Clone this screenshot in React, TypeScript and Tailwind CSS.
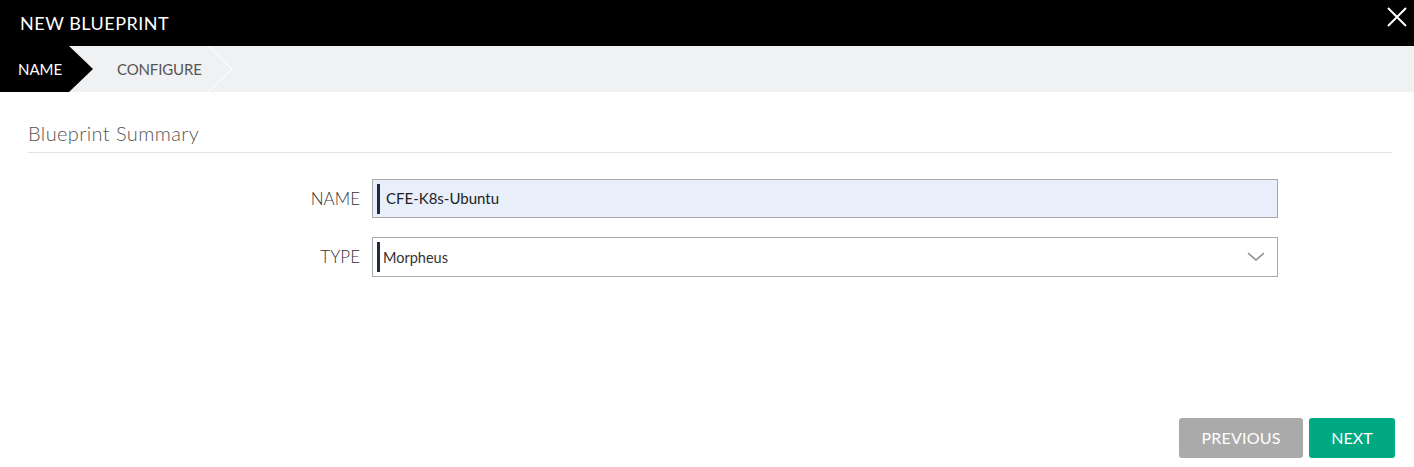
import React from 'react';

export default function App() {
  return (
    <div className="w-[1414px] h-[467px] bg-white flex flex-col font-['Lato','Open_Sans',sans-serif] overflow-hidden">
      {/* Header */}
      <div className="h-[46px] bg-black flex items-center justify-between pl-[20px] pr-[6px]">
        <h1 className="text-white text-[18px] tracking-[0.5px]">NEW BLUEPRINT</h1>
        <button className="w-[22px] h-[22px] flex items-center justify-center text-white mb-[12px]">
          <svg width="20" height="20" viewBox="0 0 20 20" fill="none" stroke="currentColor" strokeWidth="2">
            <path d="M1 1L19 19M19 1L1 19" />
          </svg>
        </button>
      </div>

      {/* Steps */}
      <div className="h-[46px] bg-[#f0f1f3] flex items-stretch">
        <div className="w-[93px] bg-black flex items-center pl-[18px] [clip-path:polygon(0_0,69px_0,100%_50%,69px_100%,0_100%)]">
          <span className="text-white text-[15px]">NAME</span>
        </div>
        <div className="relative w-[140px] flex items-center pl-[24px]">
          <span className="text-[#555] text-[15px] tracking-[-0.15px]">CONFIGURE</span>
          <svg className="absolute right-0 top-0" width="26" height="46" viewBox="0 0 26 46" fill="none">
            <path d="M1 0L25 23L1 46" stroke="#ffffff" strokeWidth="1" />
          </svg>
        </div>
      </div>

      {/* Body */}
      <div className="flex-1 flex flex-col pl-[28px] pr-[22px]">
        <div className="pt-[30px] pb-[8px] border-b border-[#e3e3e3]">
          <h2 className="text-[20px] text-[#555] font-light leading-[22px] tracking-[0.4px]">Blueprint Summary</h2>
        </div>

        <div className="flex flex-col gap-[19px] mt-[26px]">
          <div className="flex items-center">
            <label className="w-[344px] text-right pr-[12px] text-[17px] text-[#333] font-light">NAME</label>
            <div className="w-[906px] h-[39px] bg-[#e8effb] border border-[#a9a9a9] flex items-center pl-[4px]">
              <span className="w-[3px] h-[30px] bg-[#1f2a3c]" />
              <span className="ml-[6px] text-[15px] text-[#222]">CFE-K8s-Ubuntu</span>
            </div>
          </div>
          <div className="flex items-center">
            <label className="w-[344px] text-right pr-[12px] text-[17px] text-[#333] font-light">TYPE</label>
            <div className="w-[906px] h-[40px] bg-white border border-[#a9a9a9] flex items-center pl-[4px] pr-[12px]">
              <span className="w-[3px] h-[30px] bg-[#1f2a3c]" />
              <span className="ml-[3px] mt-[1px] text-[14.5px] text-[#333] flex-1">Morpheus</span>
              <svg width="18" height="10" viewBox="0 0 18 10" fill="none" stroke="#8a8a8a" strokeWidth="1.5">
                <path d="M1 1L9 8L17 1" />
              </svg>
            </div>
          </div>
        </div>

        <div className="mt-auto mb-[9px] mr-[-3px] flex justify-end gap-[6px]">
          <button className="w-[124px] h-[40px] rounded-[3px] bg-[#aaaaaa] text-white text-[16px] tracking-[0.2px]">PREVIOUS</button>
          <button className="w-[86px] h-[40px] rounded-[3px] bg-[#01a982] text-white text-[16px]">NEXT</button>
        </div>
      </div>
    </div>
  );
}
